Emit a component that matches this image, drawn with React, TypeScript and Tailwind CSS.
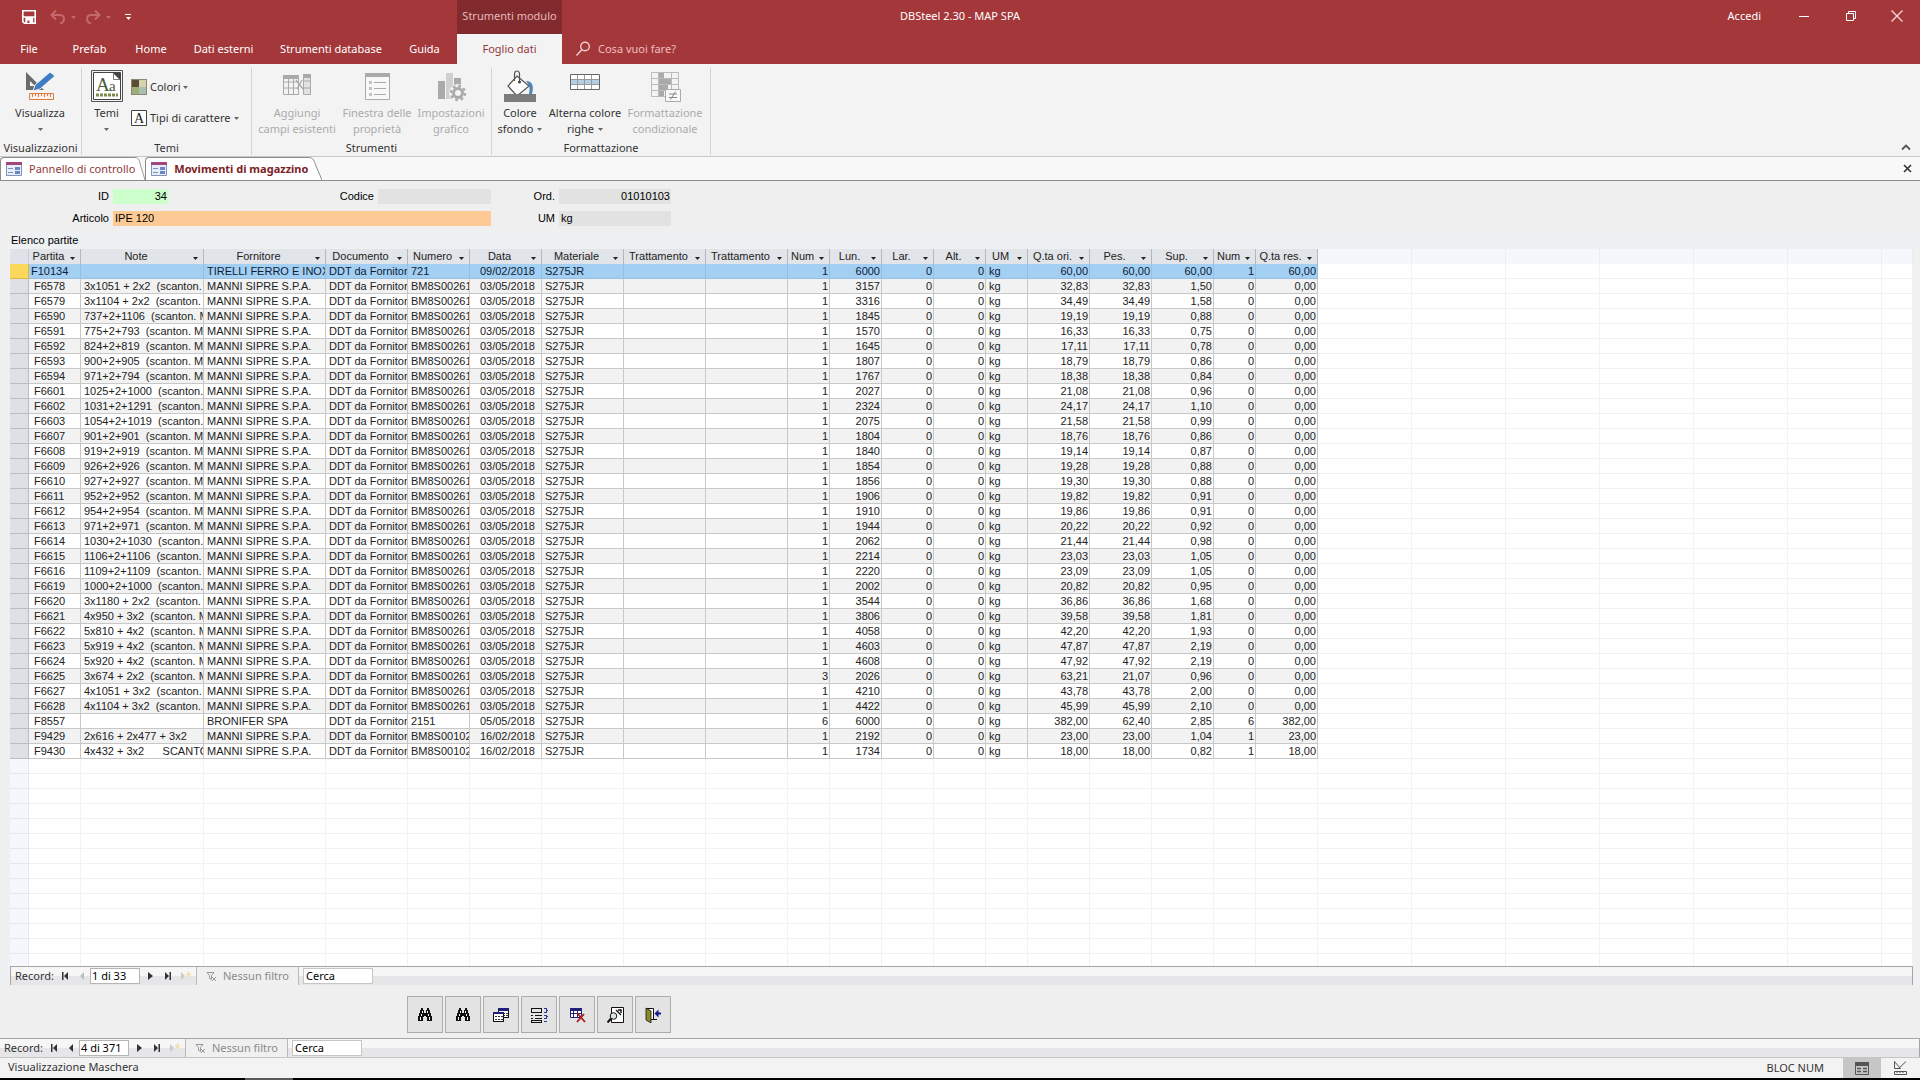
import { ReactNode } from "react";
import clsx from "clsx";

const uiFont = "font-['Noto_Sans','Open_Sans',sans-serif]";
const gridFont = "font-['Liberation_Sans',Arial,sans-serif]";

type Row = [
  partita: string,
  note: string,
  num: number,
  lun: number,
  qtaOri: string,
  pes: string,
  sup: string,
  numRes?: number,
  qtaRes?: string,
  fornitore?: string,
  numero?: string,
  data?: string
];

const rows: Row[] = [
  ["F10134", "", 1, 6000, "60,00", "60,00", "60,00", 1, "60,00", "TIRELLI FERRO E INOX", "721", "09/02/2018"],
  ["F6578", "3x1051 + 2x2  (scanton.", 1, 3157, "32,83", "32,83", "1,50"],
  ["F6579", "3x1104 + 2x2  (scanton.", 1, 3316, "34,49", "34,49", "1,58"],
  ["F6590", "737+2+1106  (scanton. M", 1, 1845, "19,19", "19,19", "0,88"],
  ["F6591", "775+2+793  (scanton. MA", 1, 1570, "16,33", "16,33", "0,75"],
  ["F6592", "824+2+819  (scanton. MA", 1, 1645, "17,11", "17,11", "0,78"],
  ["F6593", "900+2+905  (scanton. MA", 1, 1807, "18,79", "18,79", "0,86"],
  ["F6594", "971+2+794  (scanton. MA", 1, 1767, "18,38", "18,38", "0,84"],
  ["F6601", "1025+2+1000  (scanton.", 1, 2027, "21,08", "21,08", "0,96"],
  ["F6602", "1031+2+1291  (scanton.", 1, 2324, "24,17", "24,17", "1,10"],
  ["F6603", "1054+2+1019  (scanton.", 1, 2075, "21,58", "21,58", "0,99"],
  ["F6607", "901+2+901  (scanton. MA", 1, 1804, "18,76", "18,76", "0,86"],
  ["F6608", "919+2+919  (scanton. MA", 1, 1840, "19,14", "19,14", "0,87"],
  ["F6609", "926+2+926  (scanton. MA", 1, 1854, "19,28", "19,28", "0,88"],
  ["F6610", "927+2+927  (scanton. MA", 1, 1856, "19,30", "19,30", "0,88"],
  ["F6611", "952+2+952  (scanton. MA", 1, 1906, "19,82", "19,82", "0,91"],
  ["F6612", "954+2+954  (scanton. MA", 1, 1910, "19,86", "19,86", "0,91"],
  ["F6613", "971+2+971  (scanton. MA", 1, 1944, "20,22", "20,22", "0,92"],
  ["F6614", "1030+2+1030  (scanton.", 1, 2062, "21,44", "21,44", "0,98"],
  ["F6615", "1106+2+1106  (scanton.", 1, 2214, "23,03", "23,03", "1,05"],
  ["F6616", "1109+2+1109  (scanton.", 1, 2220, "23,09", "23,09", "1,05"],
  ["F6619", "1000+2+1000  (scanton.", 1, 2002, "20,82", "20,82", "0,95"],
  ["F6620", "3x1180 + 2x2  (scanton.", 1, 3544, "36,86", "36,86", "1,68"],
  ["F6621", "4x950 + 3x2  (scanton. M", 1, 3806, "39,58", "39,58", "1,81"],
  ["F6622", "5x810 + 4x2  (scanton. M", 1, 4058, "42,20", "42,20", "1,93"],
  ["F6623", "5x919 + 4x2  (scanton. M", 1, 4603, "47,87", "47,87", "2,19"],
  ["F6624", "5x920 + 4x2  (scanton. M", 1, 4608, "47,92", "47,92", "2,19"],
  ["F6625", "3x674 + 2x2  (scanton. M", 3, 2026, "63,21", "21,07", "0,96"],
  ["F6627", "4x1051 + 3x2  (scanton.", 1, 4210, "43,78", "43,78", "2,00"],
  ["F6628", "4x1104 + 3x2  (scanton.", 1, 4422, "45,99", "45,99", "2,10"],
  ["F8557", "", 6, 6000, "382,00", "62,40", "2,85", 6, "382,00", "BRONIFER SPA", "2151", "05/05/2018"],
  ["F9429", "2x616 + 2x477 + 3x2", 1, 2192, "23,00", "23,00", "1,04", 1, "23,00", "MANNI SIPRE S.P.A.", "BM8S00102", "16/02/2018"],
  ["F9430", "4x432 + 3x2      SCANTO", 1, 1734, "18,00", "18,00", "0,82", 1, "18,00", "MANNI SIPRE S.P.A.", "BM8S00102", "16/02/2018"]
];

const columns = [
  { label: "Partita", width: "w-[52px]" },
  { label: "Note", width: "w-[123px]" },
  { label: "Fornitore", width: "w-[122px]" },
  { label: "Documento", width: "w-[82px]" },
  { label: "Numero", width: "w-[62px]" },
  { label: "Data", width: "w-[72px]" },
  { label: "Materiale", width: "w-[82px]" },
  { label: "Trattamento", width: "w-[82px]" },
  { label: "Trattamento", width: "w-[82px]" },
  { label: "Num", width: "w-[42px]" },
  { label: "Lun.", width: "w-[52px]" },
  { label: "Lar.", width: "w-[52px]" },
  { label: "Alt.", width: "w-[52px]" },
  { label: "UM", width: "w-[42px]" },
  { label: "Q.ta ori.", width: "w-[62px]" },
  { label: "Pes.", width: "w-[62px]" },
  { label: "Sup.", width: "w-[62px]" },
  { label: "Num", width: "w-[42px]" },
  { label: "Q.ta res.", width: "w-[62px]" }
];

const numericColumns = new Set([9, 10, 11, 12, 14, 15, 16, 17, 18]);
const fillerColumns = [0, 1, 2, 3, 4, 5, 6];
const fillerRows = Array.from({ length: 14 }, (_, i) => i);

const toCells = (row: Row) => {
  const [partita, note, num, lun, qtaOri, pes, sup, numRes = 0, qtaRes = "0,00"] = row;
  const [, , , , , , , , , fornitore = "MANNI SIPRE S.P.A.", numero = "BM8S00261", data = "03/05/2018"] = row;
  return [
    partita, note, fornitore, "DDT da Fornitor", numero, data, "S275JR", "", "",
    num, lun, 0, 0, "kg", qtaOri, pes, sup, numRes, qtaRes
  ];
};

const cellPadding = (column: number, selected: boolean) => {
  if (column === 5) return "pr-[6px] text-right";
  if (numericColumns.has(column)) return "pr-px text-right";
  if (column === 0) return selected ? "pl-[2px]" : "pl-[5px]";
  return "pl-[3px]";
};

const Caret = ({ className }: { className?: string }) => (
  <svg viewBox="0 0 5 3" className={clsx("h-[3px] w-[5px] shrink-0 fill-current", className)}>
    <path d="M0 0h5L2.5 3z" />
  </svg>
);

/* ---------- title bar ---------- */

const TitleBar = () => (
  <div className="grid h-[34px] grid-cols-[1fr_auto_1fr] items-center">
    <div className="flex h-full">
      <div className="flex w-[457px] items-center pl-[21px]">
        <button type="button" aria-label="Salva">
          <svg viewBox="0 0 16 16" className="size-4">
            <path d="M1.8 1.8h12.4v12.4H3.4l-1.6-1.6z" fill="none" stroke="#fff" strokeWidth="1.6" />
            <path d="M2 8h12M5 9.5h6.5V14H5z" stroke="#fff" strokeWidth="1.4" fill="#fff" />
            <path d="M6.4 11.5h2V14h-2z" fill="#a4373a" />
          </svg>
        </button>
        <button type="button" aria-label="Annulla" disabled className="ml-3 flex items-center gap-1 text-[#c4686b]">
          <svg viewBox="0 0 18 16" className="h-4 w-[18px]" fill="none" stroke="currentColor" strokeWidth="2">
            <path d="M7 1.5 2.5 6 7 10.5M3 6h8c5 0 5.500 7 0 8.500" />
          </svg>
          <Caret />
        </button>
        <button type="button" aria-label="Ripeti" disabled className="ml-2 flex items-center gap-1 text-[#c4686b]">
          <svg viewBox="0 0 18 16" className="h-4 w-[18px]" fill="none" stroke="currentColor" strokeWidth="2">
            <path d="M11 1.500 15.500 6 11 10.500M15 6H7c-5 0-5.500 7 0 8.500" />
          </svg>
          <Caret />
        </button>
        <button type="button" aria-label="Personalizza barra" className="ml-[14px] flex flex-col items-center gap-[2px] text-white">
          <span className="h-px w-[6px] bg-white" />
          <Caret />
        </button>
      </div>
      <div className="flex w-[105px] items-center justify-center bg-[#822b2e] pb-[2px] text-[11px] text-[#e8b9ba]">
        Strumenti modulo
      </div>
    </div>
    <h1 className="pb-[2px] text-[11px]">DBSteel 2.30 - MAP SPA</h1>
    <div className="flex items-center justify-end pr-4 pb-[2px] text-[11px]">
      <button type="button" className="mr-[37px]">Accedi</button>
      <button type="button" aria-label="Riduci" className="mr-[35px]">
        <svg viewBox="0 0 12 12" className="size-3" stroke="#fff">
          <path d="M1 6.500h10" />
        </svg>
      </button>
      <button type="button" aria-label="Ripristina" className="mr-[33px]">
        <svg viewBox="0 0 12 12" className="size-3" stroke="#fff" fill="none">
          <path d="M1.500 3.500h7v7h-7zM3.500 3.500v-2h7v7h-2" />
        </svg>
      </button>
      <button type="button" aria-label="Chiudi">
        <svg viewBox="0 0 14 14" className="size-[14px]" stroke="#f6dada" strokeWidth="1.300">
          <path d="m1.500 1.500 11 11M12.500 1.500l-11 11" />
        </svg>
      </button>
    </div>
  </div>
);

const ribbonTabs = [
  { label: "File", width: "w-[58px]" },
  { label: "Prefab", width: "w-[63px]" },
  { label: "Home", width: "w-[60px]" },
  { label: "Dati esterni", width: "w-[85px]" },
  { label: "Strumenti database", width: "w-[130px]" },
  { label: "Guida", width: "w-[57px]" }
];

const RibbonTabs = () => (
  <nav className="flex h-[30px] text-[11px]">
    <div className="flex w-[457px] shrink-0">
      {ribbonTabs.map(({ label, width }) => (
        <button key={label} type="button" className={clsx("shrink-0 whitespace-nowrap", width)}>
          {label}
        </button>
      ))}
    </div>
    <button type="button" className="w-[105px] shrink-0 bg-[#f3f3f3] text-[#93383b]">
      Foglio dati
    </button>
    <label className="flex items-center gap-[7px] pl-[13px]">
      <svg viewBox="0 0 16 16" className="size-4" fill="none" stroke="#f3cfd0" strokeWidth="1.400">
        <circle cx="10" cy="5.500" r="4.300" />
        <path d="M7 8.500 1.500 14.500" />
      </svg>
      <input
        type="text"
        placeholder="Cosa vuoi fare?"
        className="w-[120px] bg-transparent outline-none placeholder:text-[#eebfc0]"
      />
    </label>
  </nav>
);

/* ---------- ribbon ---------- */

const DesignIcon = () => (
  <svg viewBox="0 0 32 32" className="size-8">
    <path d="M2 2v18h18z" fill="#6b6b6b" />
    <path d="M6 11v5h5z" fill="#f3f3f3" />
    <path d="m9 21 2-6L26 2l5 4-15 13z" fill="#3f7cc4" stroke="#f3f3f3" strokeWidth="1" />
    <path d="M5.500 23.500h24v6h-24z" fill="#fdf3ec" stroke="#dd7b45" />
    <path d="M8.500 24v3m3-3v2m3-2v3m3-3v2m3-2v3m3-3v2m3-2v3" stroke="#dd7b45" />
  </svg>
);

const ThemesIcon = () => (
  <svg viewBox="0 0 32 32" className="size-8">
    <path d="M.5.5h31v31H.5z" fill="#f3f3f3" stroke="#555" />
    <path d="M2.500 2.500h27v27h-27z" fill="#fff" stroke="#444" />
    <path d="M22 3h7v7z" fill="#444" />
    <path d="M22.500 3v6.500h6.500" fill="none" stroke="#777" />
    <text x="5" y="21" fontSize="19" fill="#4a5a3c" className="font-['Liberation_Serif',serif]">A</text>
    <text x="18" y="21" fontSize="15" fill="#4a5a3c" className="font-['Liberation_Serif',serif]">a</text>
    <path d="M5 25h22" stroke="#7c8a4d" strokeWidth="3" strokeDasharray="3 1" />
  </svg>
);

const ColorsIcon = () => (
  <svg viewBox="0 0 16 16" className="size-4">
    <path d="M0 0h16v16H0z" fill="#8a8a72" />
    <path d="M1 1h7v7H1z" fill="#5b4c34" />
    <path d="M8 1h7v7H8z" fill="#d6d2ac" />
    <path d="M1 8h7v7H1z" fill="#9fae79" />
    <path d="M8 8h7v7H8z" fill="#a9bfb0" />
  </svg>
);

const FontsIcon = () => (
  <svg viewBox="0 0 16 16" className="size-4">
    <path d="M.5.5h15v15H.5z" fill="#fff" stroke="#444" />
    <text x="8" y="13" fontSize="14" textAnchor="middle" fill="#222" className="font-['Liberation_Serif',serif]">A</text>
  </svg>
);

const AddFieldsIcon = () => (
  <svg viewBox="0 0 32 32" className="size-8" fill="none" stroke="#aaa">
    <path d="M2.500 5.500h15v19h-15zM2 12h16M2 18h16M7.500 8v17M12.500 8v17" />
    <path d="M2 5h16v4H2z" fill="#aaa" stroke="none" />
    <path d="M22.500 4.500h7v20h-7zM22 11h8M22 18h8" fill="#e2e2e2" />
    <path d="M22 4h8v4h-8z" fill="#aaa" stroke="none" />
    <path d="m15 10 7 9m-6 0 5-9" strokeWidth="1.300" />
  </svg>
);

const PropertiesIcon = () => (
  <svg viewBox="0 0 32 32" className="size-8" fill="none" stroke="#aaa">
    <path d="M4.500 3.500h24v26h-24z" fill="#f8f8f8" />
    <path d="M4 3h25v4H4z" fill="#aaa" stroke="none" />
    <path d="M13 12.500h12M13 18.500h12M13 24.500h12" />
    <path d="M8 11h3v3H8zM8 17h3v3H8zM8 23h3v3H8z" fill="#c4c4c4" stroke="none" />
  </svg>
);

const ChartIcon = () => (
  <svg viewBox="0 0 32 32" className="size-8">
    <path d="M3 11h7v18H3z" fill="#aaa" />
    <path d="M11 3h7v26h-7z" fill="#d0d0d0" />
    <path d="M19 8h7v10h-7z" fill="#aaa" />
    <circle cx="23" cy="23" r="9" fill="#f3f3f3" />
    <circle cx="23" cy="23" r="4.500" fill="none" stroke="#aaa" strokeWidth="3" />
    <circle cx="23" cy="23" r="7" fill="none" stroke="#aaa" strokeWidth="2.500" strokeDasharray="2.750" />
  </svg>
);

const FillIcon = () => (
  <svg viewBox="0 0 34 32" className="h-8 w-[34px]">
    <path d="m14 6 12 10-12 10L5 16z" fill="#fff" stroke="#555" strokeWidth="1.200" />
    <path d="M11.500 11V4c0-4 5-4 5 0v8" fill="none" stroke="#555" strokeWidth="1.200" />
    <circle cx="16.500" cy="12" r="1.500" fill="#444" />
    <path d="M23 11c7 0 8 6 6 13h-3c1-5 1-8-3-13z" fill="#4f86b5" />
    <path d="M1 24h32v8H1z" fill="#7c7c7c" />
  </svg>
);

const AlternateIcon = () => (
  <svg viewBox="0 0 32 32" className="size-8">
    <path d="M1.500 4.500h29v15h-29z" fill="#fff" stroke="#666" />
    <path d="M2 9h28v6H2z" fill="#b4cfe3" />
    <path d="M2 9.500h28M2 14.500h28M8.500 5v14M15.500 5v14M22.500 5v14" stroke="#999" />
  </svg>
);

const ConditionalIcon = () => (
  <svg viewBox="0 0 32 32" className="size-8" fill="none" stroke="#aaa">
    <path d="M2.500 2.500h27v24h-27zM2 8.500h27M2 14.500h27M2 20.500h27M9.500 2v24M22.500 2v24" stroke="#bbb" />
    <path d="M10 3h5v5h-5zM10 9h12v5H10zM10 15h9v5h-9zM10 21h5v5h-5z" fill="#aaa" stroke="none" />
    <path d="M16.500 19.500h15v12h-15z" fill="#f8f8f8" />
    <path d="M20 24h8M20 27.500h8M26.500 21.500l-5 8" stroke="#888" />
  </svg>
);

interface BigButtonProps {
  icon: ReactNode;
  lines: string[];
  width: string;
  caret?: boolean;
  disabled?: boolean;
}

const BigButton = ({ icon, lines, width, caret, disabled }: BigButtonProps) => (
  <button
    type="button"
    disabled={disabled}
    className={clsx("flex shrink-0 flex-col items-center pt-[6px]", width, disabled ? "text-[#ababab]" : "text-[#333]")}
  >
    {icon}
    <span className="mt-[3px] text-[11px] leading-4 whitespace-nowrap">{lines[0]}</span>
    <span className="flex h-4 items-center gap-1 text-[11px] leading-4 whitespace-nowrap">
      {lines[1]}
      {caret && <Caret className="text-[#666]" />}
    </span>
  </button>
);

const RibbonGroup = ({ label, width, children }: { label: string; width: string; children: ReactNode }) => (
  <section
    className={clsx(
      "mt-1 flex h-[87px] shrink-0 flex-col justify-between border-r border-[#d4d4d4]",
      width
    )}
  >
    <div className="-mt-1 flex">{children}</div>
    <h2 className="text-center text-[11px] leading-[14px] whitespace-nowrap text-[#333]">{label}</h2>
  </section>
);

const Ribbon = () => (
  <div className="flex h-[93px] justify-between border-b border-[#c8c8c8] bg-[#f3f3f3]">
    <div className="flex">
      <RibbonGroup label="Visualizzazioni" width="w-[82px]">
        <BigButton icon={<DesignIcon />} lines={["Visualizza"]} width="w-[80px]" caret />
      </RibbonGroup>
      <RibbonGroup label="Temi" width="w-[170px]">
        <BigButton icon={<ThemesIcon />} lines={["Temi"]} width="w-[49px]" caret />
        <div className="flex flex-col gap-[15px] pt-[15px] text-[11px] leading-4 text-[#333]">
          <button type="button" className="flex items-center gap-[3px] whitespace-nowrap">
            <ColorsIcon />
            Colori
            <Caret className="text-[#666]" />
          </button>
          <button type="button" className="flex items-center gap-[3px] whitespace-nowrap">
            <FontsIcon />
            Tipi di carattere
            <Caret className="text-[#666]" />
          </button>
        </div>
      </RibbonGroup>
      <RibbonGroup label="Strumenti" width="w-[240px]">
        <BigButton icon={<AddFieldsIcon />} lines={["Aggiungi", "campi esistenti"]} width="w-[90px]" disabled />
        <BigButton icon={<PropertiesIcon />} lines={["Finestra delle", "proprietà"]} width="w-[70px]" disabled />
        <BigButton icon={<ChartIcon />} lines={["Impostazioni", "grafico"]} width="w-[78px]" disabled />
      </RibbonGroup>
      <RibbonGroup label="Formattazione" width="w-[219px]">
        <BigButton icon={<FillIcon />} lines={["Colore", "sfondo"]} width="w-[56px]" caret />
        <BigButton icon={<AlternateIcon />} lines={["Alterna colore", "righe"]} width="w-[74px]" caret />
        <BigButton icon={<ConditionalIcon />} lines={["Formattazione", "condizionale"]} width="w-[86px]" disabled />
      </RibbonGroup>
    </div>
    <button type="button" aria-label="Comprimi barra multifunzione" className="self-end pr-[9px] pb-[5px]">
      <svg viewBox="0 0 10 7" className="h-[7px] w-[10px]" fill="none" stroke="#555" strokeWidth="1.800">
        <path d="m1 5.500 4-4 4 4" />
      </svg>
    </button>
  </div>
);

/* ---------- document tabs ---------- */

const FormIcon = () => (
  <svg viewBox="0 0 16 16" className="size-4 shrink-0">
    <path d="M.5 1.500h15v13H.5z" fill="#e8eef8" stroke="#8093bd" />
    <path d="M0 1h16v3H0z" fill="#a2457a" />
    <path d="M2 7.500h5M2 11.500h5" stroke="#7c8fc0" />
    <path d="M9 6h5v3H9zM9 10h5v3H9z" fill="#6b86c6" />
  </svg>
);

const DocumentTab = ({ label, active }: { label: string; active?: boolean }) => (
  <button type="button" className="flex h-[23px] items-stretch">
    <span
      className={clsx(
        "flex items-center gap-[7px] rounded-tl border-t border-l border-[#8c8c8c] bg-white pl-[5px] text-[11px] whitespace-nowrap",
        active ? "font-bold text-[#7c2226]" : "text-[#93383b]"
      )}
    >
      <FormIcon />
      {label}
    </span>
    <svg viewBox="0 0 14 23" className={clsx("h-[23px]", active ? "w-[14px]" : "w-[10px]")} preserveAspectRatio="none">
      <path d="M0 .5C6 .5 6 4 8 9l6 14H0z" fill="#fff" />
      <path d="M0 .5C6 .5 6 4 8 9l6 14" fill="none" stroke="#8c8c8c" />
    </svg>
  </button>
);

const DocumentTabs = () => (
  <div className="flex h-6 items-start justify-between border-b border-[#8c8c8c] bg-[#f8f8f8]">
    <div className="flex">
      <DocumentTab label="Pannello di controllo" />
      <DocumentTab label="Movimenti di magazzino" active />
    </div>
    <button type="button" aria-label="Chiudi scheda" className="self-center pr-2">
      <svg viewBox="0 0 9 9" className="size-[9px]" stroke="#333" strokeWidth="1.600">
        <path d="m1 1 7 7M8 1 1 8" />
      </svg>
    </button>
  </div>
);

/* ---------- form ---------- */

interface FieldProps {
  id: string;
  label: string;
  value: string;
  labelWidth: string;
  inputClass: string;
}

const Field = ({ id, label, value, labelWidth, inputClass }: FieldProps) => (
  <div className="flex h-[15px] items-center">
    <label htmlFor={id} className={clsx("pr-1 text-right", labelWidth)}>
      {label}
    </label>
    <input id={id} readOnly defaultValue={value} className={clsx("h-[15px] pr-px pl-[2px] outline-none", inputClass)} />
  </div>
);

const FormHeader = () => (
  <div className={clsx("flex flex-col gap-[7px] pt-2 text-[11px] leading-[15px] text-black", gridFont)}>
    <div className="flex">
      <Field id="id" label="ID" value="34" labelWidth="w-[113px]" inputClass="w-[55px] bg-[#ccffcc] text-right" />
      <Field id="codice" label="Codice" value="" labelWidth="w-[210px]" inputClass="w-[113px] bg-[#e2e2e2]" />
      <Field id="ord" label="Ord." value="01010103" labelWidth="w-[68px]" inputClass="w-[112px] bg-[#e2e2e2] text-right" />
    </div>
    <div className="flex">
      <Field id="articolo" label="Articolo" value="IPE 120" labelWidth="w-[113px]" inputClass="w-[378px] bg-[#fdca96]" />
      <Field id="um" label="UM" value="kg" labelWidth="w-[68px]" inputClass="w-[112px] bg-[#e2e2e2]" />
    </div>
  </div>
);

const Datasheet = () => (
  <div className="min-h-0 flex-1 basis-0 overflow-hidden bg-white">
    <table
      className={clsx(
        "w-full table-fixed border-separate border-spacing-0 text-[11px] leading-[13px] text-[#222]",
        gridFont
      )}
    >
      <colgroup>
        <col className="w-[19px]" />
        {columns.map(({ width }, i) => (
          <col key={i} className={width} />
        ))}
        {fillerColumns.map((i) => (
          <col key={i} className={i < 6 ? "w-[94px]" : undefined} />
        ))}
      </colgroup>
      <thead>
        <tr className="h-[15px]">
          <th className="border-r border-[#c9ccd2] bg-[#dfe2e8] p-0" />
          {columns.map(({ label }, i) => (
            <th key={i} className="border-r border-[#b4b7bc] bg-[#e1e4e8] p-0 font-normal">
              <div className="flex h-[15px] items-start pr-[5px] pl-[3px] leading-[14px]">
                <span className="flex-1 text-center whitespace-nowrap">{label}</span>
                <Caret className="mb-1 ml-[5px] self-end" />
              </div>
            </th>
          ))}
          {fillerColumns.map((i) => (
            <th key={i} className="border-r border-[#ececf4] bg-[#f6f6fd] p-0" />
          ))}
        </tr>
      </thead>
      <tbody>
        {rows.map((row, r) => (
          <tr
            key={row[0]}
            className={clsx("h-[15px]", r === 0 ? "bg-[#a3cff2] text-[#0c1c38]" : r % 2 ? "bg-[#f2f2f2]" : "bg-white")}
          >
            <td
              className={clsx(
                "border-r border-b p-0",
                r === 0 ? "border-[#d9b84a] bg-[#fbd85c]" : "border-[#bcbcc6] bg-[#dfdfe6]"
              )}
            />
            {toCells(row).map((cell, c) => (
              <td
                key={c}
                className={clsx(
                  "overflow-hidden border-r border-b pt-px pb-0 whitespace-pre",
                  r === 0 ? "border-[#98bfe0]" : "border-[#c8c8c8]",
                  cellPadding(c, r === 0)
                )}
              >
                {cell}
              </td>
            ))}
            {fillerColumns.map((i) => (
              <td key={i} className="border-r border-b border-[#f2f2f5] bg-white p-0" />
            ))}
          </tr>
        ))}
        {fillerRows.map((r) => (
          <tr key={r} className="h-[15px]">
            <td className="border-r border-b border-[#e6e6f0] bg-[#f6f6fd] p-0" />
            {[...columns, ...fillerColumns].map((_, c) => (
              <td key={c} className="border-r border-b border-[#f2f2f5] p-0" />
            ))}
          </tr>
        ))}
      </tbody>
    </table>
  </div>
);

/* ---------- record navigation ---------- */

const NavButton = ({ label, d, className, muted }: { label: string; d: string; className?: string; muted?: boolean }) => (
  <button type="button" aria-label={label} className={clsx("flex shrink-0 items-center", className)}>
    <svg viewBox="0 0 10 10" className={clsx("size-[10px] shrink-0", muted ? "fill-[#bdbdbd]" : "fill-[#333]")}>
      <path d={d} />
    </svg>
  </button>
);

const RecordBar = ({ id, position, className }: { id: string; position: string; className?: string }) => (
  <div
    className={clsx(
      "flex h-[19px] shrink-0 items-stretch border-t border-r border-[#a6a6a6] bg-linear-to-b from-[#f6f6f6] from-50% to-[#e6e6e9] to-50% text-[11px] text-[#333]",
      className
    )}
  >
    <label htmlFor={`${id}-pos`} className="flex w-[50px] shrink-0 items-center pl-1">Record:</label>
    <NavButton label="Primo record" d="M1 1h1.500v8H1zM7 1v8L3 5z" className="w-[17px]" />
    <NavButton label="Record precedente" d="M6 1v8L2 5z" className="w-[12px]" muted={id === "sub"} />
    <input
      id={`${id}-pos`}
      defaultValue={position}
      className="mt-px h-4 w-[50px] border border-[#b5b5b5] bg-white px-px text-black outline-none"
    />
    <NavButton label="Record successivo" d="M2 1v8l5-4z" className="ml-[6px] w-[17px]" />
    <NavButton label="Ultimo record" d="M2 1v8l4-4zM6.500 1H8v8H6.500z" className="w-4" />
    <button type="button" aria-label="Nuovo record" disabled className="w-[17px] shrink-0">
      <svg viewBox="0 0 14 10" className="h-[10px] w-[14px]">
        <path d="M2 1v8l4-4z" fill="#c9c9c9" />
        <path d="M9.500 0v7M6.500 3.500h6M7.500 1.500l4 4M11.500 1.500l-4 4" stroke="#ece3b4" />
      </svg>
    </button>
    <div className="flex w-[103px] shrink-0 items-center gap-[6px] border-x border-[#b9b9b9] bg-[#f0f0f0] pl-[9px] text-[#8a8a8a]">
      <svg viewBox="0 0 11 11" className="size-[11px]" fill="none" stroke="#999">
        <path d="M1 1.500h7L5.500 4.500v4l-2-1v-3zM6 6l4 4M10 6l-4 4" />
      </svg>
      Nessun filtro
    </div>
    <input
      type="text"
      aria-label="Cerca"
      defaultValue="Cerca"
      className="mt-px ml-1 h-4 w-[70px] border border-[#c6c6c6] bg-white px-[2px] text-black outline-none"
    />
  </div>
);

const BinocularsIcon = () => (
  <svg viewBox="0 0 16 16" className="size-4" shapeRendering="crispEdges">
    <path d="M4 1h2v2h1v3h2V3h1V1h2v2h1v3h1v3h1v5h-5v-4H9V9H7v1H6v4H1V9h1V6h1V3h1z" fill="#111" />
    <path d="M5 4h1v2H5zM4 7h1v2H4zM3 10h1v3H3zM10 4h1v2h-1zM11 7h1v2h-1zM12 10h1v3h-1z" fill="#fff" />
  </svg>
);

const SheetsIcon = () => (
  <svg viewBox="0 0 16 16" className="size-4" shapeRendering="crispEdges">
    <path d="M5.500 1.500h10v9h-10z" fill="#fff" stroke="#111" />
    <path d="M5 1h11v3H5z" fill="#20207a" />
    <path d="M7 6.500h8M7 8.500h8" stroke="#333" strokeDasharray="2 1" />
    <path d="M.5 5.500h10v9H.5z" fill="#fff" stroke="#111" />
    <path d="M0 5h11v2H0z" fill="#20207a" />
    <path d="M2 9.500h8M2 12.500h8" stroke="#333" strokeDasharray="2 1" />
  </svg>
);

const ReorderIcon = () => (
  <svg viewBox="0 0 18 16" className="h-4 w-[18px]" fill="none" stroke="#111" shapeRendering="crispEdges">
    <path d="M1.500 1.500h10v4h-10zM1 8.500h2M5 8.500h7M1 11.500h2M5 11.500h7M1.500 13.500h10v2h-10z" />
    <path d="M14 1.500h2l1 2-1 2h-2M14 8.500h2l1 1-1 2h-2M14 14.500h3" stroke="#2a3a9c" />
  </svg>
);

const DeleteIcon = () => (
  <svg viewBox="0 0 17 16" className="h-4 w-[17px]">
    <path d="M1.500 1.500h11v9h-11z" fill="#fff" stroke="#20207a" />
    <path d="M1 1h12v3H1zM1 6h12v1H1zM4 1h1v9H4zM8 1h1v9H8z" fill="#20207a" />
    <path d="m8 6 8 9M15 7l-7 8" stroke="#a81c22" strokeWidth="1.800" />
  </svg>
);

const PreviewIcon = () => (
  <svg viewBox="0 0 17 16" className="h-4 w-[17px]" fill="none" stroke="#111">
    <path d="M4.500.5h12v15h-12z" fill="#fff" />
    <path d="m9 3 5 5M11 3h3v3" strokeWidth="1.400" />
    <circle cx="6.500" cy="9" r="3.300" fill="#d9e6ea" />
    <path d="m4 11.500-3.500 4" strokeWidth="2" />
  </svg>
);

const ExitIcon = () => (
  <svg viewBox="0 0 16 16" className="size-4">
    <path d="M1.500 1.500h7v11h-7z" fill="#fff" stroke="#111" />
    <path d="m1 1 5 3v12l-5-3z" fill="#8a8a2a" stroke="#111" strokeWidth=".8" />
    <path d="M6 12.500h6" stroke="#111" />
    <path d="m9.500 6.500 4-4v3H16v2h-2.500v3z" fill="#17178a" />
  </svg>
);

const toolbar = [
  { label: "Trova", icon: <BinocularsIcon /> },
  { label: "Trova successivo", icon: <BinocularsIcon /> },
  { label: "Duplica", icon: <SheetsIcon /> },
  { label: "Ordina", icon: <ReorderIcon /> },
  { label: "Elimina", icon: <DeleteIcon /> },
  { label: "Anteprima", icon: <PreviewIcon /> },
  { label: "Esci", icon: <ExitIcon /> }
];

const StatusBar = () => (
  <footer className="flex h-[21px] shrink-0 items-center justify-between border-t border-[#c6c6c6] bg-[#f3f3f3] text-[11px] text-[#333]">
    <span className="pb-[2px] pl-2">Visualizzazione Maschera</span>
    <div className="flex h-full items-center">
      <span className="pr-[19px]">BLOC NUM</span>
      <button type="button" aria-label="Visualizzazione Maschera" className="flex h-full w-[38px] items-center justify-center bg-[#c6c6c6]">
        <svg viewBox="0 0 14 13" className="h-[13px] w-[14px]" fill="none" stroke="#555">
          <path d="M.5.5h13v12H.5z" />
          <path d="M0 0h14v4H0z" fill="#555" stroke="none" />
          <path d="M2 6.500h4M8 6.500h4M2 9.500h4M8 9.500h4" strokeWidth="1.500" />
        </svg>
      </button>
      <button type="button" aria-label="Visualizzazione Struttura" className="flex h-full w-[39px] items-center justify-center">
        <svg viewBox="0 0 15 14" className="h-[14px] w-[15px]" fill="none" stroke="#555">
          <path d="M1.500.5v7h6zM5 8l8-7.500M1.500 10.500h12v3h-12zM4 11v1M7 11v1M10 11v1" />
        </svg>
      </button>
    </div>
  </footer>
);

export default function App() {
  return (
    <div className={clsx("flex h-screen flex-col overflow-hidden bg-[#efefef]", uiFont)}>
      <header className="shrink-0">
        <div className="bg-[#a4373a] text-white">
          <TitleBar />
          <RibbonTabs />
        </div>
        <Ribbon />
        <DocumentTabs />
      </header>
      <main className="flex min-h-0 flex-1 flex-col">
        <FormHeader />
        <section className="mt-1 flex min-h-0 flex-1 flex-col bg-[#eef0f2] pr-[7px] pl-[10px]">
          <h2 className={clsx("pt-[2px] pb-px pl-px text-[11px] leading-4 text-black", gridFont)}>Elenco partite</h2>
          <Datasheet />
          <RecordBar id="sub" position="1 di 33" className="border-l" />
        </section>
        <div className="flex gap-[2px] pt-[11px] pb-[5px] pl-[407px]">
          {toolbar.map(({ label, icon }) => (
            <button
              key={label}
              type="button"
              aria-label={label}
              className="flex h-[37px] w-9 items-center justify-center border border-[#adadad] bg-[#e3e3e3]"
            >
              {icon}
            </button>
          ))}
        </div>
        <RecordBar id="main" position="4 di 371" />
      </main>
      <StatusBar />
      <div className="h-[2px] shrink-0 bg-black pl-[245px]">
        <div className="h-full w-12 bg-[#5a5a5a]" />
      </div>
    </div>
  );
}
